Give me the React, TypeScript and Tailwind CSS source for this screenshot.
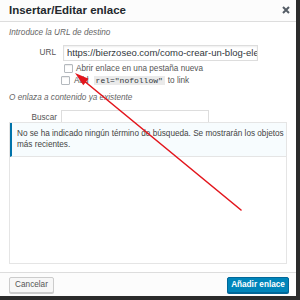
import React from 'react';

const Checkbox: React.FC<{ className?: string }> = ({ className = '' }) => (
  <span
    className={`block w-[9px] h-[9px] shrink-0 border border-[#b4b9be] bg-white rounded-[1px] shadow-[inset_0_1px_1px_rgba(0,0,0,0.08)] ${className}`}
  />
);

const Arrow: React.FC = () => (
  <svg className="absolute left-0 top-0 pointer-events-none" width="300" height="300" viewBox="0 0 300 300">
    <line x1="241" y1="210" x2="83" y2="80" stroke="#e3161d" strokeWidth="1.6" strokeLinecap="round" />
    <polygon points="75,73 83.3,85.2 88.6,78.8" fill="#e3161d" />
  </svg>
);

export default function App() {
  return (
    <div
      className="relative w-[300px] h-[300px] bg-[#2b2b2b] overflow-hidden"
      style={{ fontFamily: '"Liberation Sans", Arial, sans-serif' }}
    >
      <div className="w-[296px] h-[296px] bg-white flex flex-col">
        {/* header */}
        <div className="h-[22px] shrink-0 bg-[#fcfcfc] border-b border-[#dddddd] flex items-center justify-between pl-[9px] pr-[6px]">
          <h1 className="text-[11.5px] font-bold text-[#23282d] leading-none">Insertar/Editar enlace</h1>
          <svg width="8" height="8" viewBox="0 0 8 8" className="mt-[-1px]">
            <path d="M1 1 L7 7 M7 1 L1 7" stroke="#555d66" strokeWidth="2" />
          </svg>
        </div>

        {/* body */}
        <div className="flex-1 flex flex-col px-[9px] pt-[6px] text-[8.2px] text-[#555555] leading-[10px]">
          <p className="italic text-[#666666] h-[10px]">Introduce la URL de destino</p>

          <div className="mt-[7px] flex items-center h-[16px]">
            <span className="w-[47px] text-right text-[#555555]">URL</span>
            <div className="ml-[7px] w-[195px] h-[16px] border border-[#dddddd] bg-white shadow-[inset_0_1px_2px_rgba(0,0,0,0.07)] overflow-hidden flex items-center px-[3px]">
              <span className="text-[9.5px] text-[#32373c] whitespace-nowrap">https://bierzoseo.com/como-crear-un-blog-elegir</span>
            </div>
          </div>

          <div className="mt-[3px] flex items-center h-[9px] pl-[55px]">
            <Checkbox />
            <span className="ml-[3px] text-[#555555]">Abrir enlace en una pestaña nueva</span>
          </div>

          <div className="mt-[3px] flex items-center h-[9px] pl-[52px]">
            <Checkbox />
            <span className="ml-[4px] text-[#555555]">Add</span>
            <code
              className="ml-[5px] bg-[#eaeaea] px-[2px] h-[9px] flex items-center text-[8px] text-[#32373c]"
              style={{ fontFamily: '"Liberation Mono", monospace' }}
            >
              rel="nofollow"
            </code>
            <span className="ml-[3px] text-[#555555]">to link</span>
          </div>

          <p className="mt-[8px] italic text-[#666666] h-[10px]">O enlaza a contenido ya existente</p>

          <div className="mt-[7px] flex items-center h-[12px]">
            <span className="w-[48px] text-right text-[#555555] mt-[3px]">Buscar</span>
            <div className="ml-[4px] w-[148px] h-[12px] border border-b-0 border-[#dddddd] bg-white" />
          </div>

          <div className="flex-1 mb-[8px] border border-[#e5e5e5] bg-white flex flex-col">
            <div className="border-l-2 border-[#0073aa] bg-[#f7fcfe] pl-[5px] pt-[5px] pb-[6px] text-[#444444] leading-[11px] border-b border-b-[#e5e5e5]">
              <span className="block whitespace-nowrap">No se ha indicado ningún término de búsqueda. Se mostrarán los objetos</span>
              <span className="block whitespace-nowrap">más recientes.</span>
            </div>
          </div>
        </div>

        {/* footer */}
        <div className="h-[24px] shrink-0 bg-[#fcfcfc] border-t border-[#dddddd] flex items-center justify-between pl-[9px] pr-[7px] pt-[1px]">
          <button className="h-[16px] w-[45px] border border-[#cccccc] bg-[#f7f7f7] rounded-[2px] text-[8.2px] text-[#555555] shadow-[0_1px_0_#cccccc] flex items-center justify-center">
            Cancelar
          </button>
          <button className="h-[16px] w-[62px] border border-[#006799] bg-[#0085ba] rounded-[2px] text-[8.2px] font-bold text-white shadow-[0_1px_0_#006799] flex items-center justify-center">
            Añadir enlace
          </button>
        </div>
      </div>
      <Arrow />
    </div>
  );
}
